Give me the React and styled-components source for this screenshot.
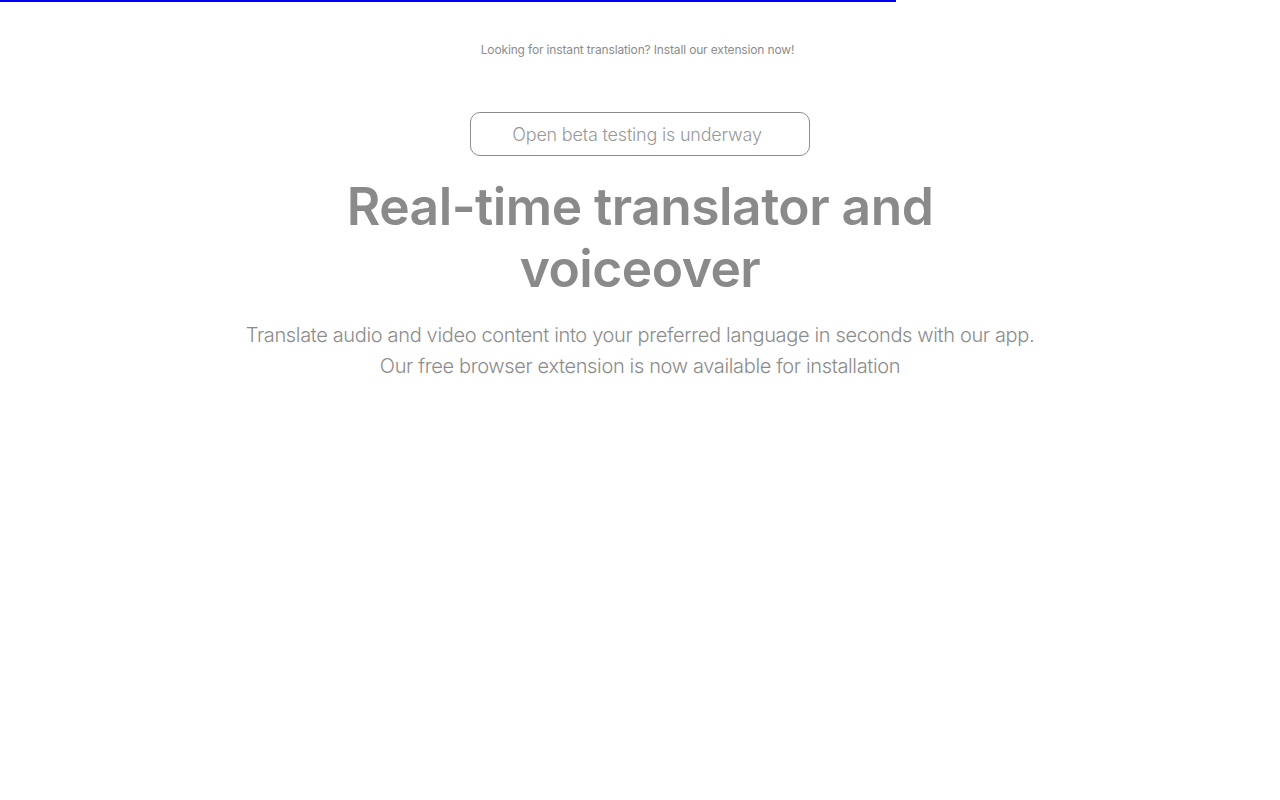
import React from 'react';
import styled, { createGlobalStyle } from 'styled-components';

const GlobalStyle = createGlobalStyle`
    body {
        margin: 0;
        background: #ffffff;
        font-family: Inter, "Noto Sans", sans-serif;
    }
`;

const Progress = styled.div`
    height: 2px;
    background: #0000f5;
`;

const Hero = styled.section`
    display: flex;
    flex-direction: column;
    align-items: center;
    padding-top: 40px;
    color: #8a8a8a;
    text-align: center;
`;

const Notice = styled.p`
    margin: 0 5px 0 0;
    font-size: 12px;
    line-height: 16px;
    font-weight: 400;
    letter-spacing: -0.15px;
    color: #8c8c8c;
`;

const Badge = styled.div`
    margin-top: 54px;
    width: 340px;
    height: 44px;
    box-sizing: border-box;
    display: flex;
    align-items: center;
    justify-content: center;
    border: 1px solid #8c8c8c;
    border-radius: 10px;
    font-size: 18px;
    font-weight: 300;
    letter-spacing: -0.2px;
    color: #999999;

    span {
        margin-left: -6px;
    }
`;

const Title = styled.h1`
    margin: 19px 0 0;
    max-width: 620px;
    font-size: 51.5px;
    line-height: 62px;
    font-weight: 600;
    letter-spacing: -0.5px;
    color: #8a8a8a;
`;

const Lead = styled.p`
    margin: 21px 0 0;
    font-size: 20px;
    line-height: 31px;
    font-weight: 300;
    letter-spacing: -0.35px;
    color: #8c8c8c;
`;

function App() {
    return (
        <>
            <GlobalStyle />
            <Progress style={{ width: '70%' }} />
            <Hero>
                <Notice>Looking for instant translation? Install our extension now!</Notice>
                <Badge><span>Open beta testing is underway</span></Badge>
                <Title>Real-time translator and voiceover</Title>
                <Lead>
                    Translate audio and video content into your preferred language in seconds with our app.
                    <br />
                    Our free browser extension is now available for installation
                </Lead>
            </Hero>
        </>
    );
}

export default App;
